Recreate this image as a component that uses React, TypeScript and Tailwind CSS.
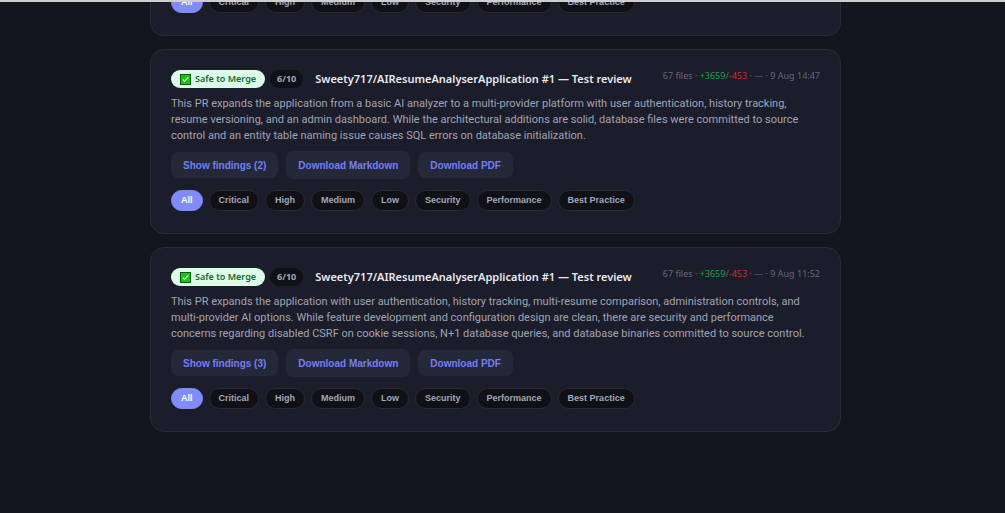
import React from 'react';

const filters = ['All', 'Critical', 'High', 'Medium', 'Low', 'Security', 'Performance', 'Best Practice'];

const reviews = [
  {
    id: 1,
    score: '6/10',
    title: 'Sweety717/AIResumeAnalyserApplication #1 — Test review',
    files: 67,
    added: '+3659',
    removed: '-453',
    date: '9 Aug 14:47',
    findings: 2,
    summary:
      'This PR expands the application from a basic AI analyzer to a multi-provider platform with user authentication, history tracking, resume versioning, and an admin dashboard. While the architectural additions are solid, database files were committed to source control and an entity table naming issue causes SQL errors on database initialization.'
  },
  {
    id: 2,
    score: '6/10',
    title: 'Sweety717/AIResumeAnalyserApplication #1 — Test review',
    files: 67,
    added: '+3659',
    removed: '-453',
    date: '9 Aug 11:52',
    findings: 3,
    summary:
      'This PR expands the application with user authentication, history tracking, multi-resume comparison, administration controls, and multi-provider AI options. While feature development and configuration design are clean, there are security and performance concerns regarding disabled CSRF on cookie sessions, N+1 database queries, and database binaries committed to source control.'
  }
];

type Review = (typeof reviews)[number];

const CheckIcon = () => (
  <svg className="h-[11px] w-[11px] shrink-0" viewBox="0 0 11 11" aria-hidden="true">
    <rect width="11" height="11" fill="#0b5a12" />
    <rect x="1" y="1" width="9" height="9" fill="#16c60c" />
    <path d="M2.8 5.7 L4.6 7.5 L8.3 3.4" fill="none" stroke="#ffffff" strokeWidth="1.2" />
  </svg>
);

const FilterPills = () => (
  <div className="flex shrink-0 gap-[6px] font-['Liberation_Sans',sans-serif] text-[9px] font-bold">
    {filters.map((name, index) => (
      <button
        key={name}
        type="button"
        className={
          index === 0
            ? 'h-[21px] rounded-full border border-[#818cf8] bg-[#818cf8] px-[9px] text-white'
            : 'h-[21px] rounded-full border border-[#272a38] bg-[#0f1117] px-[9px] text-[#a3a6b8]'
        }
      >
        {name}
      </button>
    ))}
  </div>
);

const ReviewCard = ({ review }: { review: Review }) => (
  <article className="rounded-[14px] border border-[#292b39] bg-[#1c1d2a] px-5 pt-5 pb-[22px]">
    <div className="flex items-start justify-between whitespace-nowrap">
      <div className="flex items-center">
        <span className="flex h-[18px] items-center gap-1 rounded-full bg-[#dcfce7] px-[9px] text-[9px] font-semibold text-[#166534]">
          <CheckIcon />
          Safe to Merge
        </span>
        <span className="ml-[5px] flex h-[18px] items-center rounded-full bg-[#0f1117] px-[7px] text-[9px] font-bold text-[#a3a6b8]">
          {review.score}
        </span>
        <h2 className="ml-3 text-[11px] leading-[18px] font-semibold text-[#e8e9f0]">{review.title}</h2>
      </div>
      <p className="text-[9px] leading-[12px] text-[#646779]">
        {review.files} files · <span className="text-[#16a34a]">{review.added}</span>/
        <span className="text-[#dc2626]">{review.removed}</span> · — · {review.date}
      </p>
    </div>

    <p className="mt-2 pr-3 font-['Roboto',sans-serif] text-[11px] leading-[16px] text-[#a0a3b4]">{review.summary}</p>

    <div className="mt-[7px] mb-[11px] flex items-center gap-2 font-['Liberation_Sans',sans-serif] text-[10px] font-bold text-[#757ef5]">
      <button type="button" className="h-[26px] rounded-[7px] bg-[#242838] px-3">
        Show findings ({review.findings})
      </button>
      <a href="#markdown" className="flex h-7 items-center rounded-[7px] bg-[#242838] px-3">
        Download Markdown
      </a>
      <button type="button" className="h-[26px] rounded-[7px] bg-[#242838] px-3">
        Download PDF
      </button>
    </div>

    <FilterPills />
  </article>
);

export default function App() {
  return (
    <div className="min-h-screen border-t-2 border-[#d0cdd0] bg-[#13161e] pr-[14px] font-['Noto_Sans',sans-serif]">
      <main className="mx-auto flex max-w-[691px] flex-col gap-[13px]">
        {/* Tail of the card that is scrolled out of view */}
        <section className="rounded-b-[14px] border-x border-b border-[#292b39] bg-[#1c1d2a] px-5 pb-[22px]">
          <div className="flex h-[11px] flex-col justify-end overflow-hidden">
            <FilterPills />
          </div>
        </section>

        {reviews.map((review) => (
          <ReviewCard key={review.id} review={review} />
        ))}
      </main>
    </div>
  );
}
